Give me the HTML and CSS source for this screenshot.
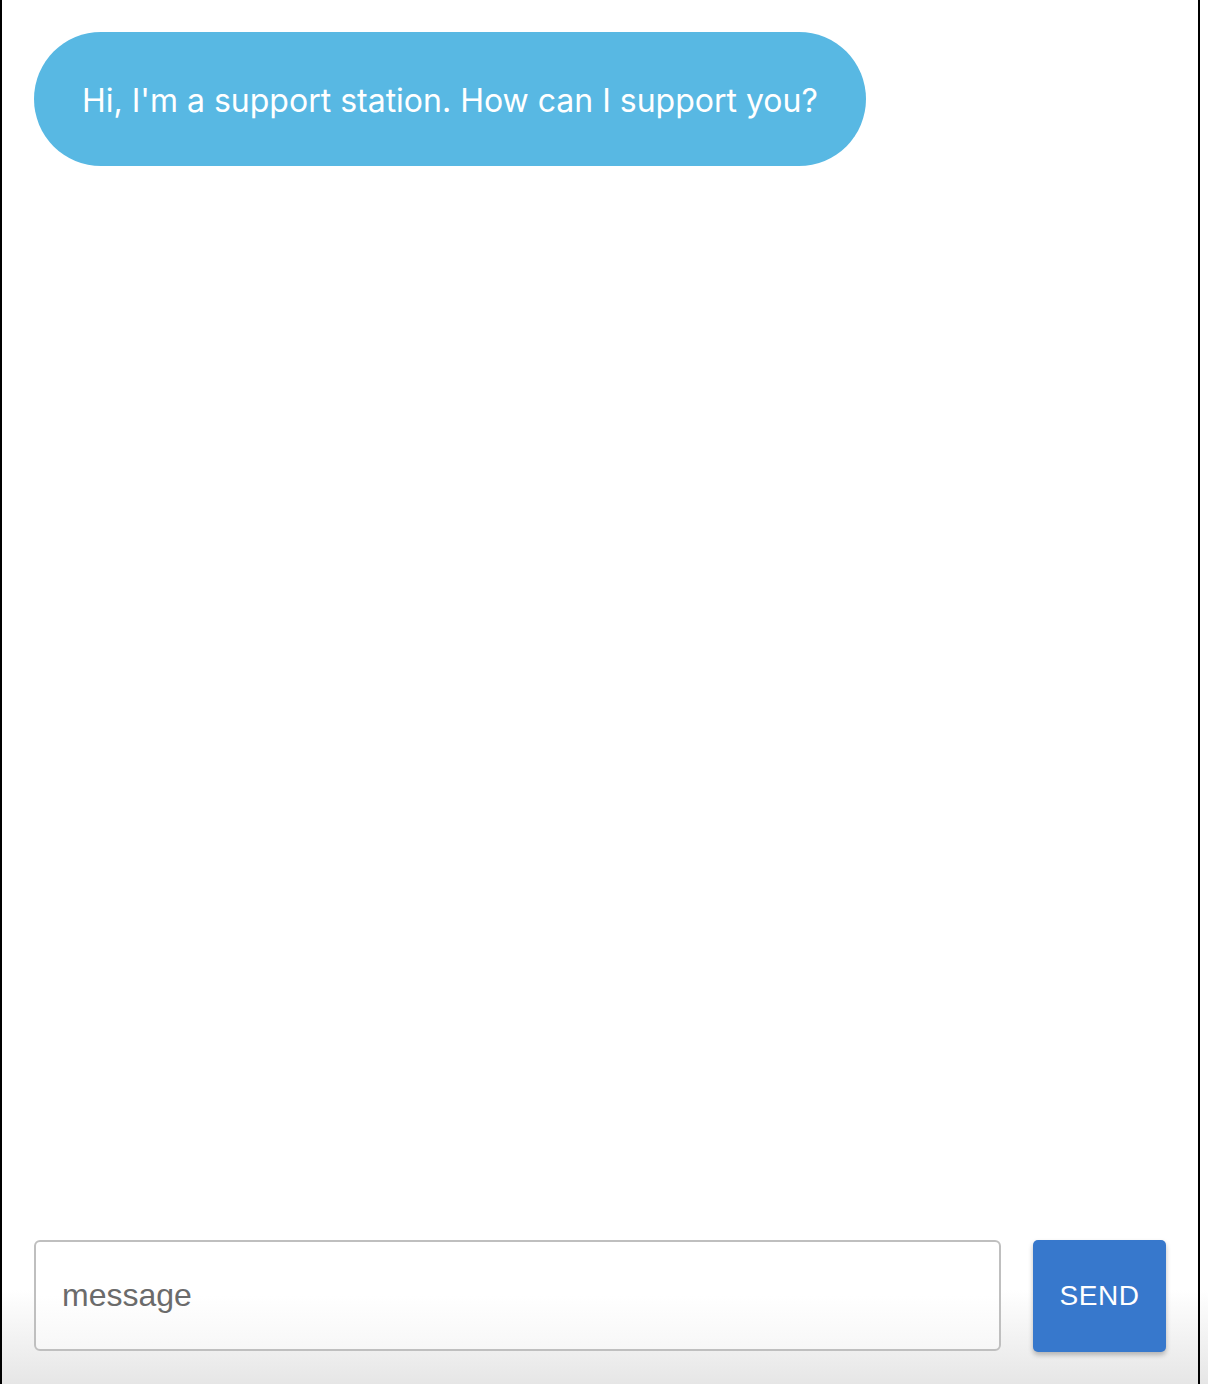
FILE: index.html
```html
<!DOCTYPE html>
<html lang="en">
<head>
<meta charset="utf-8">
<title>Support chat</title>
<link rel="stylesheet" href="styles.css">
</head>
<body>
<div class="chat">
  <div class="messages">
    <div class="bubble">Hi, I'm a support station. How can I support you?</div>
  </div>
  <form class="composer">
    <input class="field" type="text" placeholder="message">
    <button class="send" type="button">SEND</button>
  </form>
</div>
</body>
</html>
```

FILE: styles.css
```css
html, body {
  margin: 0;
  padding: 0;
  height: 100%;
}
body {
  background: linear-gradient(to bottom, #ffffff 0, #ffffff 1290px, #e6e6e6 1384px);
  width: 1208px;
  min-height: 1384px;
}
.chat {
  box-sizing: border-box;
  width: 1200px;
  height: 1384px;
  border-left: 2px solid #000;
  border-right: 2px solid #000;
  padding: 32px 32px 32px 32px;
  display: flex;
  flex-direction: column;
}
.messages {
  flex: 1;
  display: flex;
  flex-direction: column;
  align-items: flex-start;
}
.bubble {
  background: #58b8e3;
  color: #fff;
  font-family: Inter, "Noto Sans", sans-serif;
  font-size: 32px;
  line-height: 38px;
  height: 134px;
  box-sizing: border-box;
  padding: 3px 48px 0 48px;
  display: flex;
  align-items: center;
  border-radius: 67px;
  white-space: nowrap;
}
.composer {
  margin: 0;
  display: flex;
  gap: 32px;
  align-items: stretch;
  height: 112px;
}
.field {
  flex: 1;
  box-sizing: border-box;
  height: 111px;
  margin: 0;
  border: 2px solid #bfbfbf;
  border-radius: 6px;
  padding: 0 26px;
  font-family: "Liberation Sans", Arial, sans-serif;
  font-size: 32px;
  color: #333;
  background: linear-gradient(to bottom, #ffffff 0, #ffffff 50%, #f7f7f7 100%);
  outline: none;
}
.field::placeholder {
  color: #6b6b6b;
}
.send {
  width: 133px;
  height: 112px;
  margin: 0;
  border: none;
  border-radius: 5px;
  background: #3778cc;
  color: #fff;
  font-family: "Liberation Sans", Arial, sans-serif;
  font-size: 28px;
  letter-spacing: 0.5px;
  box-shadow: 0 3px 5px rgba(0, 0, 0, 0.25);
  padding: 0;
}
```
